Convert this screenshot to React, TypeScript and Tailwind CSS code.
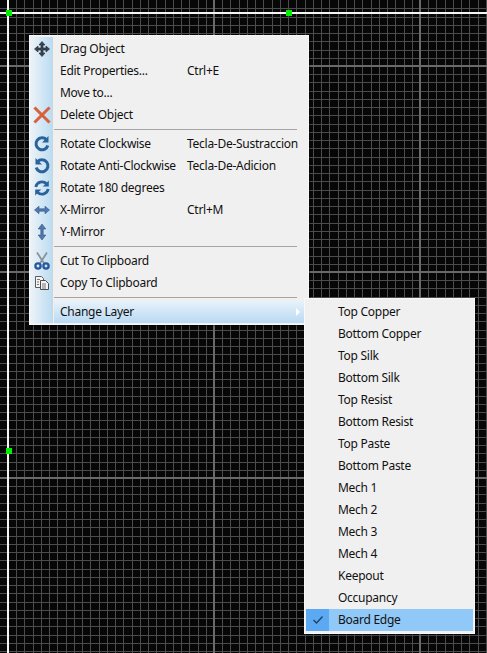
import React from "react";

const FONT = "font-['Noto_Sans',sans-serif] text-[12px] leading-[22px] tracking-[-0.27px] text-[#111]";

function Grid() {
  const W = 487;
  const H = 653;
  const step = 8.24;
  const v: number[] = [];
  const h: number[] = [];
  for (let k = 0; k * step + 8 < W; k++) v.push(Math.round(8 + k * step));
  for (let k = -7; k * step + 66 < H; k++) h.push(Math.round(66 + k * step));
  return (
    <svg width={W} height={H} className="block" shapeRendering="crispEdges">
      {v.map((x) => (
        <rect key={"v" + x} x={x} y={0} width={1} height={H} fill="#4c4c4c" />
      ))}
      {h.map((y) => (
        <rect key={"h" + y} x={0} y={y} width={W} height={1} fill="#4c4c4c" />
      ))}
      {[213, 419].map((x) => (
        <rect key={x} x={x} y={0} width={2} height={H} fill="#6a6a6a" />
      ))}
      {[65, 271, 477].map((y) => (
        <rect key={y} x={0} y={y} width={W} height={2} fill="#6a6a6a" />
      ))}
      <rect x={7} y={0} width={2} height={H} fill="#f4f4f4" />
      <rect x={0} y={12} width={W} height={2} fill="#f4f4f4" />
      <rect x={6} y={10} width={6} height={6} fill="#00f000" />
      <rect x={286} y={10} width={6} height={6} fill="#00f000" />
      <rect x={6} y={448} width={6} height={6} fill="#00f000" />
    </svg>
  );
}

const Ic = ({ children }: { children: React.ReactNode }) => (
  <svg width="20" height="20" viewBox="0 0 20 20" className="block">
    {children}
  </svg>
);

const MoveIcon = () => (
  <Ic>
    <path d="M10 2.500l3 3.500h-2v3h3V7l3.500 3-3.500 3v-2h-3v3h2l-3 3.500-3-3.500h2v-3H6v2l-3.500-3L6 7v2h3V6H7z" fill="#36424f" stroke="#2a333e" strokeWidth="0.700" />
  </Ic>
);
const DeleteIcon = () => (
  <Ic>
    <path d="M3.500 3.500l13 13M16.500 3.500l-13 13" stroke="#d9603c" strokeWidth="3" strokeLinecap="square" />
  </Ic>
);
const CwIcon = () => (
  <Ic>
    <path d="M14.500 5.800A6 6 0 1 0 15.800 11.500" fill="none" stroke="#2a639c" strokeWidth="3" />
    <path d="M16.500 2v6.500h-6.500z" fill="#2a639c" />
  </Ic>
);
const CcwIcon = () => (
  <Ic>
    <path d="M5.500 5.800A6 6 0 1 1 4.200 11.500" fill="none" stroke="#2a639c" strokeWidth="3" />
    <path d="M3.500 2v6.500h6.500z" fill="#2a639c" />
  </Ic>
);
const R180Icon = () => (
  <Ic>
    <path d="M3.800 9A6.300 6.300 0 0 1 14.500 5.800" fill="none" stroke="#2a639c" strokeWidth="2.800" />
    <path d="M16.800 2.500v6h-6z" fill="#2a639c" />
    <path d="M16.200 11A6.300 6.300 0 0 1 5.500 14.200" fill="none" stroke="#2a639c" strokeWidth="2.800" />
    <path d="M3.200 17.500v-6h6z" fill="#2a639c" />
  </Ic>
);
const XMirrorIcon = () => (
  <Ic>
    <path d="M2.500 10l4.500-3.800v2.600h6V6.200l4.500 3.800-4.500 3.800v-2.600H7v2.600z" fill="#4f79ae" stroke="#355684" strokeWidth="0.600" />
  </Ic>
);
const YMirrorIcon = () => (
  <Ic>
    <path d="M10 2l3.800 5h-2.600v6h2.600L10 18l-3.800-5h2.600V7H6.200z" fill="#4f79ae" stroke="#355684" strokeWidth="0.600" />
  </Ic>
);
const CutIcon = () => (
  <Ic>
    <path d="M5 1.500l7.500 11.500M15 1.500L7.500 13" stroke="#8a929a" strokeWidth="1.800" fill="none" />
    <circle cx="6" cy="15" r="2.600" fill="none" stroke="#25589c" strokeWidth="2.300" />
    <circle cx="14" cy="15" r="2.600" fill="none" stroke="#25589c" strokeWidth="2.300" />
  </Ic>
);
const CopyIcon = () => (
  <Ic>
    <path d="M3.500 3.500h6l2 2v9h-8z" fill="#f4f4f4" stroke="#5c5c5c" />
    <path d="M8.500 7.500h5l3 3v6h-8z" fill="#f4f4f4" stroke="#4c4c4c" />
    <path d="M5 6.500h3M5 9h2M5 11.500h2M10 11h4M10 13h4M10 15h4" stroke="#777" strokeWidth="1" />
  </Ic>
);

function MainRow({ label, shortcut, icon }: { label: string; shortcut?: string; icon?: React.ReactNode }) {
  return (
    <div className="flex h-[22px] items-center">
      <div className="flex w-[24px] shrink-0 justify-center">{icon}</div>
      <div className="ml-[6px] w-[127px] whitespace-nowrap">{label}</div>
      {shortcut && <div className="whitespace-nowrap">{shortcut}</div>}
    </div>
  );
}

const Sep = () => <div className="my-[3px] ml-[24px] mr-[11px] h-[1px] bg-[#a6a6a6]" />;

const GROUP1 = [
  { label: "Drag Object", icon: <MoveIcon /> },
  { label: "Edit Properties...", shortcut: "Ctrl+E" },
  { label: "Move to..." },
  { label: "Delete Object", icon: <DeleteIcon /> },
];
const GROUP2 = [
  { label: "Rotate Clockwise", shortcut: "Tecla-De-Sustraccion", icon: <CwIcon /> },
  { label: "Rotate Anti-Clockwise", shortcut: "Tecla-De-Adicion", icon: <CcwIcon /> },
  { label: "Rotate 180 degrees", icon: <R180Icon /> },
  { label: "X-Mirror", shortcut: "Ctrl+M", icon: <XMirrorIcon /> },
  { label: "Y-Mirror", icon: <YMirrorIcon /> },
];
const GROUP3 = [
  { label: "Cut To Clipboard", icon: <CutIcon /> },
  { label: "Copy To Clipboard", icon: <CopyIcon /> },
];
const LAYERS = [
  "Top Copper",
  "Bottom Copper",
  "Top Silk",
  "Bottom Silk",
  "Top Resist",
  "Bottom Resist",
  "Top Paste",
  "Bottom Paste",
  "Mech 1",
  "Mech 2",
  "Mech 3",
  "Mech 4",
  "Keepout",
  "Occupancy",
];

export default function App() {
  return (
    <div className={`relative h-[653px] w-[487px] overflow-hidden bg-[#070707] ${FONT}`}>
      <Grid />

      <div className="absolute left-[29px] top-[35px] w-[280px] border border-[#f8f8f8] bg-[#f0f0f0] pb-[1px] pt-[1px] shadow-[1px_1px_1px_rgba(0,0,0,0.4)]">
        <div className="relative">
          <div className="absolute inset-y-0 left-0 w-[23px] border-r border-[#c8d6e0] bg-gradient-to-r from-[#eef3f7] to-[#bcdcf2]" />
          <div className="relative pt-[1px]">
            {GROUP1.map((r) => <MainRow key={r.label} {...r} />)}
            <Sep />
            {GROUP2.map((r) => <MainRow key={r.label} {...r} />)}
            <Sep />
            {GROUP3.map((r) => <MainRow key={r.label} {...r} />)}
            <Sep />
            <div className="ml-[24px] flex h-[22px] items-center bg-gradient-to-b from-[#e8f2fa] to-[#b8d9f3]">
              <div className="ml-[6px] flex-1 whitespace-nowrap">Change Layer</div>
              <div className="mr-[8px] h-0 w-0 border-y-[4px] border-l-[4px] border-y-transparent border-l-white" />
            </div>
          </div>
        </div>
      </div>

      <div className="absolute left-[304px] top-[298px] w-[171px] border border-[#f8f8f8] bg-[#f0f0f0] py-[2px] shadow-[1px_1px_1px_rgba(0,0,0,0.4)]">
        {LAYERS.map((l) => (
          <div key={l} className="flex h-[22px] items-center pl-[33px] whitespace-nowrap">{l}</div>
        ))}
        <div className="mx-[1px] flex h-[22px] items-center bg-[#90c8f8]">
          <div className="flex h-full w-[23px] items-center justify-center bg-[#5aa9f2]">
            <svg width="12" height="10" viewBox="0 0 12 10"><path d="M1.500 5l3 3 6-6.500" fill="none" stroke="#24405c" strokeWidth="1.300" /></svg>
          </div>
          <div className="ml-[9px] whitespace-nowrap">Board Edge</div>
        </div>
      </div>
    </div>
  );
}
